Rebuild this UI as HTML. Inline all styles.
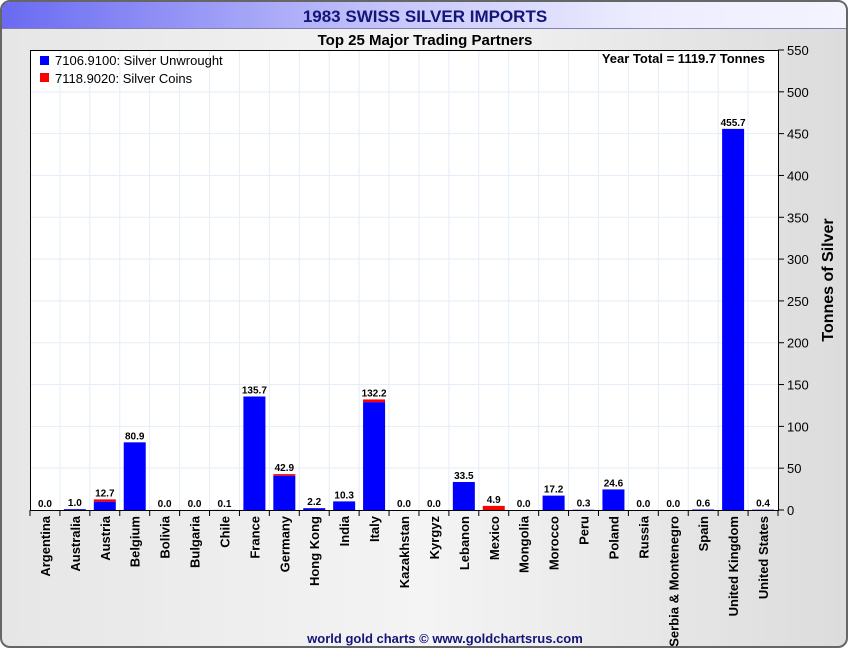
<!DOCTYPE html>
<html><head><meta charset="utf-8"><style>
html,body{margin:0;padding:0;width:850px;height:650px;overflow:hidden;background:#fff}
</style></head><body>
<svg width="850" height="650" xmlns="http://www.w3.org/2000/svg" font-family="Liberation Sans, sans-serif">
<defs>
<linearGradient id="hd" x1="0" x2="1" y1="0" y2="0"><stop offset="0" stop-color="#6a6af2"/><stop offset="0.45" stop-color="#c4c4fa"/><stop offset="0.75" stop-color="#ececff"/><stop offset="1" stop-color="#f4f4ff"/></linearGradient>
<linearGradient id="bg" x1="0" x2="1" y1="0" y2="0"><stop offset="0" stop-color="#e6e6e6"/><stop offset="0.5" stop-color="#f4f4f4"/><stop offset="1" stop-color="#dcdcdc"/></linearGradient>
</defs>
<rect x="1" y="1" width="846" height="646" rx="9" fill="url(#bg)" stroke="#666" stroke-width="2"/>
<path d="M2,28 L2,11 Q2,2 11,2 L837,2 Q846,2 846,11 L846,28 Z" fill="url(#hd)"/>
<line x1="2" y1="28.5" x2="846" y2="28.5" stroke="#8080b0"/>
<text x="425" y="22" text-anchor="middle" font-size="17" font-weight="bold" fill="#14147a">1983 SWISS SILVER IMPORTS</text>
<text x="425" y="45" text-anchor="middle" font-size="15" font-weight="bold" fill="#000">Top 25 Major Trading Partners</text>
<rect x="30.5" y="50.5" width="748" height="460" fill="#fff" stroke="#000"/>
<g stroke="#e3eef8" stroke-width="1" id="grid"></g>
<g id="main"></g>
<rect x="40" y="56" width="9" height="9" fill="#0000ff"/>
<text x="55" y="65" font-size="13" fill="#000">7106.9100: Silver Unwrought</text>
<rect x="40" y="73" width="9" height="9" fill="#ff0000"/>
<text x="55" y="83" font-size="13" fill="#000">7118.9020: Silver Coins</text>
<text x="765" y="63" text-anchor="end" font-size="13" font-weight="bold" fill="#000">Year Total = 1119.7 Tonnes</text>
<text transform="translate(833,280) rotate(-90)" text-anchor="middle" font-size="16" font-weight="bold" fill="#000">Tonnes of Silver</text>
<text x="445" y="643" text-anchor="middle" font-size="13" font-weight="bold" fill="#14147a">world gold charts © www.goldchartsrus.com</text>
</svg>
<script>
var ns="http://www.w3.org/2000/svg";
function el(t,a,p,txt){var e=document.createElementNS(ns,t);for(var k in a)e.setAttribute(k,a[k]);if(txt!=null)e.textContent=txt;(p||document.querySelector('svg')).appendChild(e);return e;}
var g=document.getElementById('grid'),m=document.getElementById('main');
var k=460/550;
for(var v=50;v<550;v+=50){var y=510-v*k;el('line',{x1:31,x2:778,y1:y,y2:y},g);}
var w=748/25;
for(var i=1;i<25;i++){var x=30+i*w;el('line',{x1:x,x2:x,y1:51,y2:510},g);}
var d=[["Argentina",0,0,"0.0"],["Australia",1,0,"1.0"],["Austria",10,2.7,"12.7"],["Belgium",80.9,0,"80.9"],["Bolivia",0,0,"0.0"],["Bulgaria",0,0,"0.0"],["Chile",0.1,0,"0.1"],["France",135.7,0,"135.7"],["Germany",41,1.9,"42.9"],["Hong Kong",2.2,0,"2.2"],["India",10.3,0,"10.3"],["Italy",129,3.2,"132.2"],["Kazakhstan",0,0,"0.0"],["Kyrgyz",0,0,"0.0"],["Lebanon",33.5,0,"33.5"],["Mexico",0,4.9,"4.9"],["Mongolia",0,0,"0.0"],["Morocco",17.2,0,"17.2"],["Peru",0.3,0,"0.3"],["Poland",24.6,0,"24.6"],["Russia",0,0,"0.0"],["Serbia & Montenegro",0,0,"0.0"],["Spain",0.6,0,"0.6"],["United Kingdom",455.7,0,"455.7"],["United States",0.4,0,"0.4"]];
d.forEach(function(r,i){var cx=30+i*w+w/2;var hb=r[1]*k,hr=r[2]*k;
if(hb>0)el('rect',{x:cx-11,y:510-hb,width:22,height:hb,fill:'#0000ff'},m);
if(hr>0)el('rect',{x:cx-11,y:510-hb-hr,width:22,height:hr,fill:'#ff0000'},m);
var tot=(r[1]+r[2])*k;
el('text',{x:cx,y:507-tot,'text-anchor':'middle','font-size':10,'font-weight':'bold',fill:'#000'},m,r[3]);
el('line',{x1:30+i*w,x2:30+i*w,y1:510,y2:516,stroke:'#000'},m);
el('text',{transform:'translate('+(cx+5)+',516) rotate(-90)','text-anchor':'end','font-size':13,'font-weight':'bold',fill:'#000'},m,r[0]);
});
el('line',{x1:778,x2:778,y1:510,y2:516,stroke:'#000'},m);
for(var v=0;v<=550;v+=50){var y=510-v*k;el('line',{x1:778,x2:784,y1:y,y2:y,stroke:'#000'},m);el('text',{x:787,y:y+5,'font-size':13,fill:'#000'},m,String(v));}
</script>
</body></html>
